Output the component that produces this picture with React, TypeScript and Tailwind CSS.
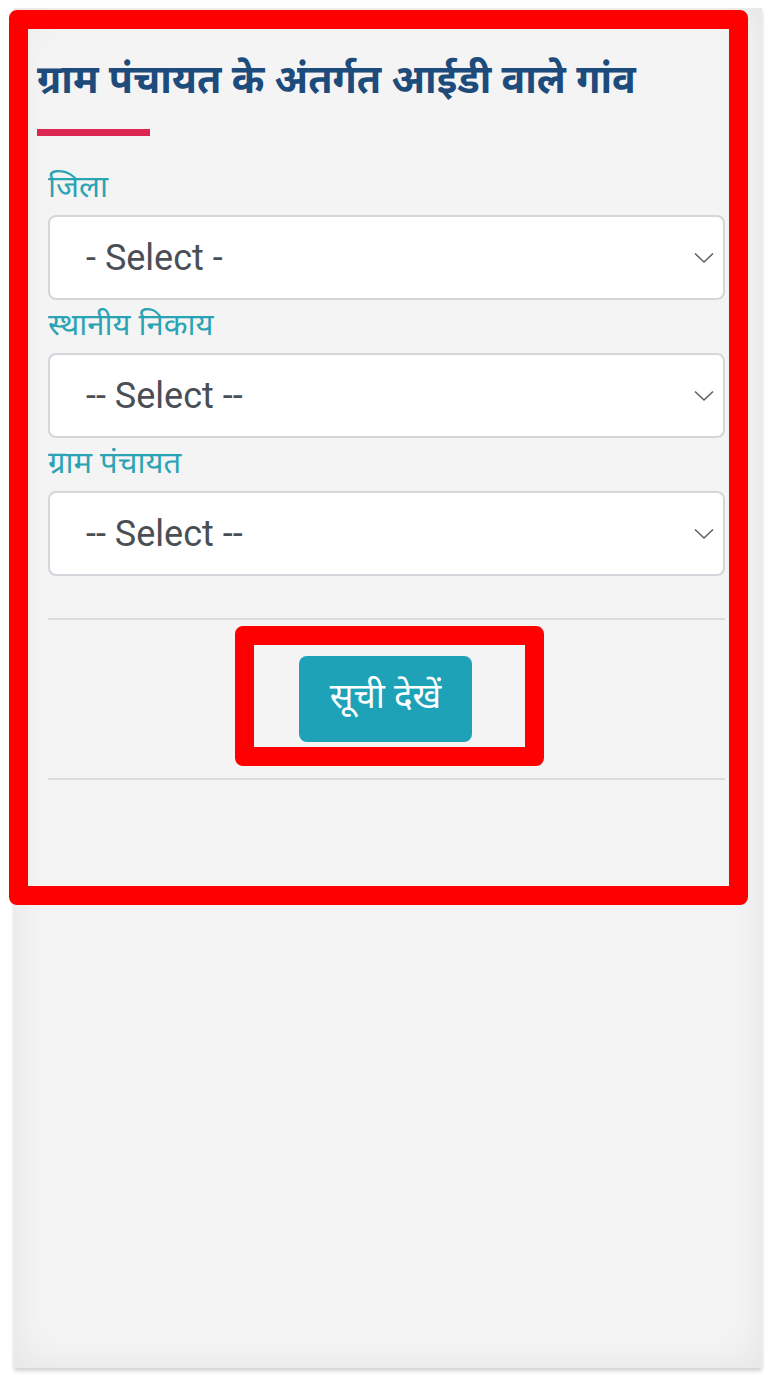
import React from "react";

const hindi = { fontFamily: '"Noto Sans Devanagari", "Noto Sans", "Lohit Devanagari", sans-serif' };
const latin = { fontFamily: 'Roboto, "Noto Sans", sans-serif' };

function Chevron() {
  return (
    <svg width="20" height="12" viewBox="0 0 20 12" fill="none" className="shrink-0">
      <polyline points="1,1.5 10,10 19,1.5" stroke="#5f6368" strokeWidth="1.6" />
    </svg>
  );
}

function SelectBox({ label, placeholder }: { label: string; placeholder: string }) {
  return (
    <div>
      <label className="block h-[53px] pt-[8px] text-[31px] leading-[40px] text-[#2aa3b5]" style={hindi}>
        {label}
      </label>
      <div className="flex h-[85px] items-center justify-between rounded-[8px] border-2 border-[#d3d6da] bg-white pl-[36px] pr-[9px]">
        <span className="text-[36px] text-[#4a4f55]" style={latin}>
          {placeholder}
        </span>
        <Chevron />
      </div>
    </div>
  );
}

export default function App() {
  return (
    <div className="relative min-h-[1375px] bg-white">
      <div className="ml-[14px] pt-[8px]">
        <div className="h-[1360px] w-[748px] bg-[#f4f4f4] shadow-[inset_0_0_40px_rgba(0,0,0,0.07),0_3px_4px_rgba(0,0,0,0.18)]">
          <div className="pl-[23px] pr-[37px] pt-[48px]">
            <h2 className="text-[39.4px] font-bold leading-[56px] text-[#1c4b7c]" style={hindi}>
              ग्राम पंचायत के अंतर्गत आईडी वाले गांव
            </h2>
            <div className="mt-[17px] h-[7px] w-[113px] bg-[#dc2752]" />
          </div>

          <div className="ml-[34px] mr-[37px] mt-[26px]">
            <div className="flex flex-col">
              <SelectBox label="जिला" placeholder="- Select -" />
              <SelectBox label="स्थानीय निकाय" placeholder="-- Select --" />
              <SelectBox label="ग्राम पंचायत" placeholder="-- Select --" />
            </div>

            <div className="mt-[42px] border-t-2 border-[#dcdcdc]" />
            <div className="flex justify-center py-[36px]">
              <button
                className="ml-[-2px] flex h-[86px] w-[173px] items-center justify-center rounded-[8px] bg-[#1ea2b8] text-[35px] leading-none text-white"
                style={hindi}
              >
                सूची देखें
              </button>
            </div>
            <div className="border-t-2 border-[#dcdcdc]" />
          </div>
        </div>
      </div>

      {/* red annotation frames */}
      <div className="pointer-events-none absolute left-[9px] top-[10px] h-[895px] w-[739px] rounded-[8px] border-[19px] border-[#ff0000]" />
      <div className="pointer-events-none absolute left-[235px] top-[626px] h-[140px] w-[309px] rounded-[8px] border-[19px] border-[#ff0000]" />
    </div>
  );
}
